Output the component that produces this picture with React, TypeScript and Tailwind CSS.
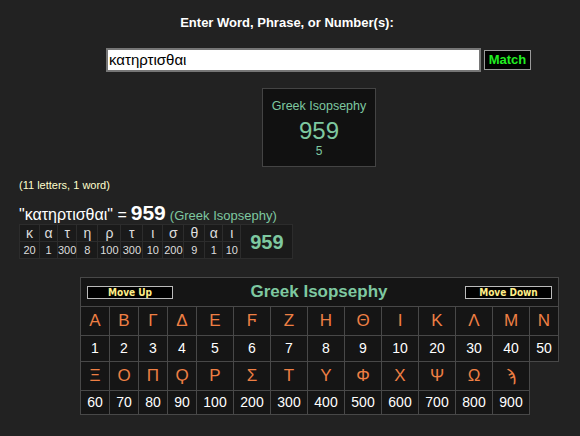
import React from "react";

const letters1 = ["Α","Β","Γ","Δ","Ε","Ϝ","Ζ","Η","Θ","Ι","Κ","Λ","Μ","Ν"];
const nums1 = ["1","2","3","4","5","6","7","8","9","10","20","30","40","50"];
const letters2 = ["Ξ","Ο","Π","Ϙ","Ρ","Σ","Τ","Υ","Φ","Χ","Ψ","Ω","ϡ"];
const nums2 = ["60","70","80","90","100","200","300","400","500","600","700","800","900"];
const colW = ["w-[29px]","w-[29px]","w-[29px]","w-[29px]","w-[37px]","w-[37px]","w-[37px]","w-[37px]","w-[37px]","w-[37px]","w-[37px]","w-[37px]","w-[37px]","w-[29px]"];

const bd = [
  ["κ","20","w-[20px]"],["α","1","w-[18px]"],["τ","300","w-[19px]"],["η","8","w-[21px]"],
  ["ρ","100","w-[23px]"],["τ","300","w-[22px]"],["ι","10","w-[20px]"],["σ","200","w-[21px]"],
  ["θ","9","w-[21px]"],["α","1","w-[18px]"],["ι","10","w-[18px]"],
];

export default function App() {
  return (
    <div className="w-[580px] h-[436px] overflow-hidden bg-[#222222] text-white" style={{ fontFamily: '"Liberation Sans", Arial, sans-serif' }}>
      <div className="pt-[14px] pr-[6px] text-center text-[13px] leading-[17px] font-bold text-white">
        Enter Word, Phrase, or Number(s):
      </div>
      <div className="mt-[17px] ml-[106px] flex items-center">
        <div className="w-[375px] h-[24px] border-2 border-[#767676] bg-white text-black text-[15px] leading-[20px] pl-[1px]">κατηρτισθαι</div>
        <div className="ml-[3px] w-[47px] h-[20px] bg-black border border-[#9a9a9a] text-[#22ee22] font-bold text-[13px] leading-[18px] text-center">Match</div>
      </div>
      <div className="mt-[16px] ml-[262px] w-[114px] h-[79px] bg-[#111111] border border-[#444444] flex flex-col items-center text-[#7ec8a0]">
        <div className="mt-[10px] text-[12.5px] leading-[14px]">Greek Isopsephy</div>
        <div className="mt-[4px] text-[24px] leading-[28px]">959</div>
        <div className="-mt-[1px] text-[12px] leading-[14px]">5</div>
      </div>
      <div className="mt-[11px] ml-[19px] text-[11px] leading-[14px] text-[#ffffcc]">(11 letters, 1 word)</div>
      <div className="mt-[5px] ml-[19px] flex items-baseline h-[24px]">
        <span className="text-[16px]">"κατηρτισθαι" =</span>
        <span className="ml-[4px] text-[21px] font-bold">959</span>
        <span className="ml-[4px] text-[13px] text-[#7ec8a0]">(Greek Isopsephy)</span>
      </div>
      <div className="mt-[3px] ml-[19px] flex">
        <table className="border-collapse">
          <tbody>
            <tr className="h-[17px]">
              {bd.map((c, i) => (
                <td key={i} className={`${c[2]} border border-[#2c2c2c] bg-[#1a1a1a] text-center text-[14px] leading-[15px] text-[#dddddd] p-0`}>{c[0]}</td>
              ))}
              <td rowSpan={2} className="w-[52px] border border-[#2c2c2c] bg-[#1a1a1a] text-center text-[20px] font-bold text-[#7ec8a0] p-0">959</td>
            </tr>
            <tr className="h-[17px]">
              {bd.map((c, i) => (
                <td key={i} className="border border-[#2c2c2c] bg-[#1a1a1a] text-center text-[11px] leading-[14px] text-[#dddddd] p-0">{c[1]}</td>
              ))}
            </tr>
          </tbody>
        </table>
      </div>
      <div className="mt-[18px] ml-[80px]">
        <table className="border-collapse">
          <tbody>
            <tr className="h-[29px]">
              <td colSpan={14} className="border border-[#484848] bg-[#151515] p-0">
                <div className="flex items-center justify-between px-[6px]">
                  <div className="w-[86px] h-[13px] bg-black border border-[#bbbbbb] text-[#ffee88] text-[10px] leading-[11px] font-bold text-center" style={{ fontFamily: 'Tahoma, "DejaVu Sans Condensed", sans-serif' }}>Move Up</div>
                  <div className="text-[17px] font-bold text-[#7ec8a0]">Greek Isopsephy</div>
                  <div className="w-[87px] h-[13px] bg-black border border-[#bbbbbb] text-[#ffee88] text-[10px] leading-[11px] font-bold text-center" style={{ fontFamily: 'Tahoma, "DejaVu Sans Condensed", sans-serif' }}>Move Down</div>
                </div>
              </td>
            </tr>
            <tr className="h-[29px]">
              {letters1.map((l, i) => (
                <td key={i} className={`${colW[i]} border border-[#484848] bg-[#151515] text-center text-[17px] text-[#ee7f44] p-0`}>{l}</td>
              ))}
            </tr>
            <tr className="h-[26px]">
              {nums1.map((n, i) => (
                <td key={i} className="border border-[#484848] bg-[#151515] text-center text-[14px] text-white p-0">{n}</td>
              ))}
            </tr>
            <tr className="h-[29px]">
              {letters2.map((l, i) => (
                <td key={i} className="border border-[#484848] bg-[#151515] text-center text-[17px] text-[#ee7f44] p-0">{l}</td>
              ))}
              <td className="p-0 border-0"></td>
            </tr>
            <tr className="h-[24px]">
              {nums2.map((n, i) => (
                <td key={i} className="border border-[#484848] bg-[#151515] text-center text-[14px] text-white p-0">{n}</td>
              ))}
              <td className="p-0 border-0"></td>
            </tr>
          </tbody>
        </table>
      </div>
    </div>
  );
}
